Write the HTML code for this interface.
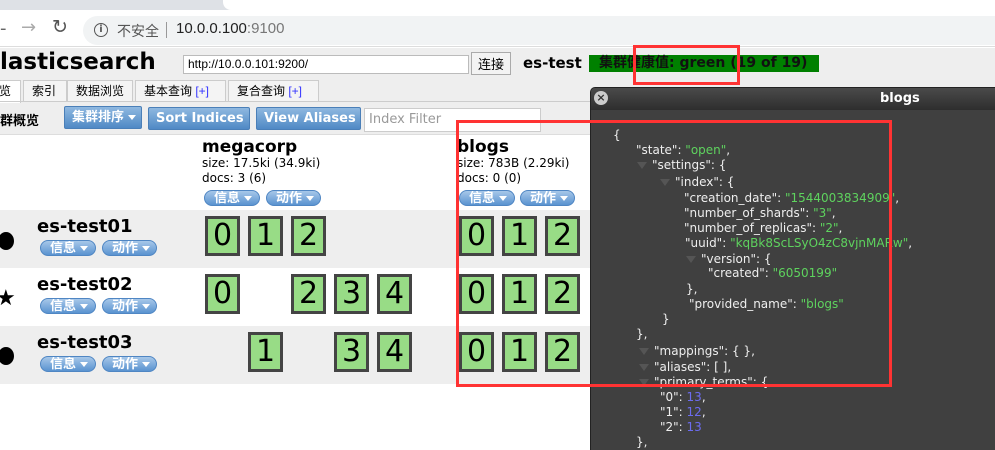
<!DOCTYPE html>
<html><head><meta charset="utf-8"><style>
*{box-sizing:border-box;margin:0;padding:0}
body{width:995px;height:450px;overflow:hidden;position:relative;background:#fff;font-family:"DejaVu Sans","Liberation Sans","Noto Sans CJK SC",sans-serif;font-size:12px;color:#000}
.a{position:absolute;white-space:nowrap}
.btn{position:absolute;height:23px;border-radius:2px;background:linear-gradient(#8fb8e0,#4f89c5);border:1px solid #4a7fb8;color:#fff;font-weight:bold;font-size:13px;line-height:21px;padding-left:7px}
.pill{position:absolute;height:16px;border-radius:8px;background:linear-gradient(#a7c7e9,#5a93d0);border:1px solid #4f86c3;color:#fff;font-weight:bold;font-size:13px;line-height:15px;padding-left:9px;overflow:hidden}
.tri{display:inline-block;border-left:4px solid transparent;border-right:4px solid transparent;border-top:5px solid #fff;vertical-align:middle;margin-left:4px}
.sh{position:absolute;width:35px;height:40px;border:3px solid #444;background:#98dc86;font-size:30px;text-align:center;line-height:34px;font-family:"DejaVu Sans",sans-serif}
.tab{position:absolute;top:80px;height:22px;border:1px solid #ccc;border-bottom:none;background:#f4f4f4;font-size:12px;line-height:20px;padding-left:8px;font-family:"Liberation Sans","Noto Sans CJK SC",sans-serif}
.j{position:absolute;white-space:nowrap;color:#eee;font-size:12px;font-family:"DejaVu Sans",sans-serif}
.g{color:#5ed35e}.n{color:#6c6cf0}
.t{display:inline-block;border-left:5px solid transparent;border-right:5px solid transparent;border-top:7px solid #555;margin-right:5px}
</style></head><body>
<div class="a" style="left:0;top:0;width:995px;height:10px;background:#dee1e6"></div>
<div class="a" style="left:223px;top:0;width:772px;height:10px;background:#fff;border-radius:0 0 0 8px"></div>
<div class="a" style="left:0;top:10px;width:995px;height:37px;background:#fff;border-bottom:1px solid #ddd"></div>
<div class="a" style="left:0;top:18px;font-size:18px;color:#666">-</div>
<div class="a" style="left:21px;top:17px;font-size:18px;color:#aaa">→</div>
<div class="a" style="left:52px;top:16px;font-size:19px;color:#555">↻</div>
<div class="a" style="left:83px;top:16px;width:912px;height:29px;background:#f1f3f4;border-radius:15px 0 0 15px"></div>
<div class="a" style="left:94px;top:23px;width:14px;height:14px;border:1.5px solid #555;border-radius:50%;font-size:10px;text-align:center;line-height:11px;font-weight:bold;color:#555">i</div>
<div class="a" style="left:117px;top:21px;font-size:14px;color:#555;font-family:'Noto Sans CJK SC',sans-serif">不安全</div>
<div class="a" style="left:166px;top:22px;width:1px;height:16px;background:#999"></div>
<div class="a" style="left:176px;top:20px;font-size:15px;color:#222;font-family:'Liberation Sans',sans-serif">10.0.0.100<span style="color:#777">:9100</span></div>

<div class="a" style="left:0;top:48px;width:995px;height:86px;background:#eee"></div>
<div class="a" style="left:0;top:49px;font-size:23px;font-weight:bold">lasticsearch</div>
<div class="a" style="left:183px;top:55px;width:286px;height:19px;background:#fff;border:1px solid #bbb;font-size:12px;padding:1px 4px;font-family:'Liberation Sans',sans-serif">http://10.0.0.101:9200/</div>
<div class="a" style="left:471px;top:52px;width:40px;height:23px;border:1px solid #aaa;background:#f3f3f3;font-size:13px;text-align:center;line-height:21px;font-family:'Noto Sans CJK SC',sans-serif">连接</div>
<div class="a" style="left:523px;top:54px;font-size:15px;font-weight:bold">es-test</div>
<div class="a" style="left:589px;top:55px;width:230px;height:17px;background:#008000;font-size:14px;font-weight:bold;line-height:17px;padding-left:10px;color:#111">集群健康值: green (19 of 19)</div>

<div class="tab" style="left:-10px;width:31px;background:#fff;height:23px">览</div>
<div class="tab" style="left:23px;width:44px">索引</div>
<div class="tab" style="left:67px;width:66px">数据浏览</div>
<div class="tab" style="left:135px;width:91px">基本查询 <span style="color:#33f">[+]</span></div>
<div class="tab" style="left:228px;width:91px">复合查询 <span style="color:#33f">[+]</span></div>
<div class="a" style="left:0;top:101px;width:995px;height:1px;background:#ccc"></div>
<div class="a" style="left:0;top:110px;font-size:13px;font-weight:bold">群概览</div>
<div class="btn" style="left:64px;top:106px;width:78px">集群排序<span class="tri"></span></div>
<div class="btn" style="left:148px;top:107px;width:102px">Sort Indices<span class="tri"></span></div>
<div class="btn" style="left:256px;top:107px;width:105px">View Aliases<span class="tri"></span></div>
<div class="a" style="left:364px;top:108px;width:177px;height:24px;background:#fff;border:1px solid #ccc;color:#999;font-size:13px;padding:3px 4px">Index Filter</div>
<div class="a" style="left:0;top:134px;width:995px;height:1px;background:#ddd"></div>

<div class="a" style="left:202px;top:137px;font-size:17px;font-weight:bold">megacorp</div>
<div class="a" style="left:202px;top:156px">size: 17.5ki (34.9ki)</div>
<div class="a" style="left:202px;top:171px">docs: 3 (6)</div>
<div class="pill" style="left:204px;top:190px;width:56px">信息<span class="tri"></span></div>
<div class="pill" style="left:266px;top:190px;width:55px">动作<span class="tri"></span></div>
<div class="a" style="left:457px;top:137px;font-size:17px;font-weight:bold">blogs</div>
<div class="a" style="left:457px;top:156px">size: 783B (2.29ki)</div>
<div class="a" style="left:457px;top:171px">docs: 0 (0)</div>
<div class="pill" style="left:459px;top:190px;width:56px">信息<span class="tri"></span></div>
<div class="pill" style="left:520px;top:190px;width:55px">动作<span class="tri"></span></div>

<div class="a" style="left:0;top:210px;width:995px;height:58px;background:#eee"></div>
<div class="a" style="left:0;top:326px;width:995px;height:58px;background:#eee"></div>

<div class="a" style="left:-2px;top:232px;width:16px;height:18px;border-radius:50%;background:#000"></div>
<div class="a" style="left:-4px;top:286px;font-size:22px">★</div>
<div class="a" style="left:-2px;top:347px;width:16px;height:18px;border-radius:50%;background:#000"></div>
<div class="a" style="left:37px;top:216px;font-size:18px;font-weight:bold">es-test01</div>
<div class="a" style="left:37px;top:274px;font-size:18px;font-weight:bold">es-test02</div>
<div class="a" style="left:37px;top:332px;font-size:18px;font-weight:bold">es-test03</div>
<div class="pill" style="left:40px;top:240px;width:56px">信息<span class="tri"></span></div>
<div class="pill" style="left:102px;top:240px;width:55px">动作<span class="tri"></span></div>
<div class="pill" style="left:40px;top:298px;width:56px">信息<span class="tri"></span></div>
<div class="pill" style="left:102px;top:298px;width:55px">动作<span class="tri"></span></div>
<div class="pill" style="left:40px;top:356px;width:56px">信息<span class="tri"></span></div>
<div class="pill" style="left:102px;top:356px;width:55px">动作<span class="tri"></span></div>

<div class="sh" style="left:205px;top:216px">0</div><div class="sh" style="left:248px;top:216px">1</div><div class="sh" style="left:291px;top:216px">2</div>
<div class="sh" style="left:205px;top:274px">0</div><div class="sh" style="left:291px;top:274px">2</div><div class="sh" style="left:334px;top:274px">3</div><div class="sh" style="left:377px;top:274px">4</div>
<div class="sh" style="left:248px;top:332px">1</div><div class="sh" style="left:334px;top:332px">3</div><div class="sh" style="left:377px;top:332px">4</div>
<div class="sh" style="left:459px;top:216px">0</div><div class="sh" style="left:502px;top:216px">1</div><div class="sh" style="left:545px;top:216px">2</div>
<div class="sh" style="left:459px;top:274px">0</div><div class="sh" style="left:502px;top:274px">1</div><div class="sh" style="left:545px;top:274px">2</div>
<div class="sh" style="left:459px;top:332px">0</div><div class="sh" style="left:502px;top:332px">1</div><div class="sh" style="left:545px;top:332px">2</div>

<div class="a" style="left:590px;top:87px;width:405px;height:363px;background:#3c3c3c;border:1px solid #222;border-radius:5px 0 0 0"></div>
<div class="a" style="left:591px;top:88px;width:404px;height:22px;background:linear-gradient(#4a4a4a,#2e2e2e);border-radius:4px 0 0 0"></div>
<div class="a" style="left:594px;top:91px;width:14px;height:14px;border-radius:50%;background:#ccc;color:#333;font-size:11px;font-weight:bold;text-align:center;line-height:14px">×</div>
<div class="a" style="left:880px;top:91px;color:#fff;font-weight:bold;font-size:13px">blogs</div>
<div class="a" style="left:591px;top:110px;width:404px;height:340px;background:#404040"></div>

<div class="j" style="left:613px;top:128px">{</div>
<div class="j" style="left:636px;top:143px">"state": <span class="g">"open"</span>,</div>
<div class="j" style="left:637px;top:158px"><span class="t"></span>"settings": {</div>
<div class="j" style="left:660px;top:175px"><span class="t"></span>"index": {</div>
<div class="j" style="left:684px;top:191px">"creation_date": <span class="g">"1544003834909"</span>,</div>
<div class="j" style="left:684px;top:206px">"number_of_shards": <span class="g">"3"</span>,</div>
<div class="j" style="left:684px;top:221px">"number_of_replicas": <span class="g">"2"</span>,</div>
<div class="j" style="left:685px;top:236px">"uuid": <span class="g">"kqBk8ScLSyO4zC8vjnMARw"</span>,</div>
<div class="j" style="left:686px;top:252px"><span class="t"></span>"version": {</div>
<div class="j" style="left:708px;top:266px">"created": <span class="g">"6050199"</span></div>
<div class="j" style="left:686px;top:282px">},</div>
<div class="j" style="left:689px;top:297px">"provided_name": <span class="g">"blogs"</span></div>
<div class="j" style="left:662px;top:312px">}</div>
<div class="j" style="left:636px;top:327px">},</div>
<div class="j" style="left:639px;top:344px"><span class="t"></span>"mappings": { },</div>
<div class="j" style="left:639px;top:360px"><span class="t"></span>"aliases": [ ],</div>
<div class="j" style="left:639px;top:375px"><span class="t"></span>"primary_terms": {</div>
<div class="j" style="left:660px;top:390px">"0": <span class="n">13</span>,</div>
<div class="j" style="left:660px;top:405px">"1": <span class="n">12</span>,</div>
<div class="j" style="left:660px;top:420px">"2": <span class="n">13</span></div>
<div class="j" style="left:636px;top:435px">},</div>

<div class="a" style="left:633px;top:45px;width:107px;height:40px;border:3px solid #f33"></div>
<div class="a" style="left:456px;top:120px;width:436px;height:267px;border:3px solid #f33"></div>
</body></html>
